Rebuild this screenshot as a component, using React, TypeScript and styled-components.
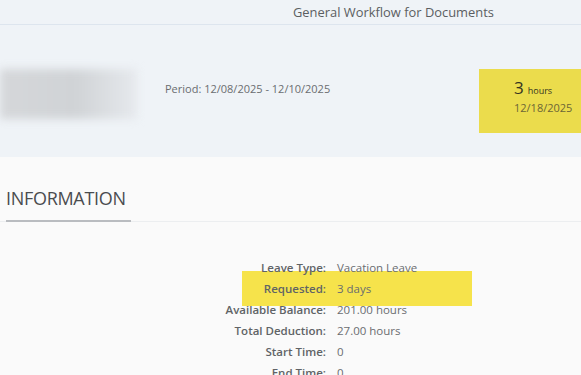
import React from "react";
import styled, { createGlobalStyle } from "styled-components";

const GlobalStyle = createGlobalStyle`
  html, body {
    margin: 0;
    padding: 0;
    background: #fafafa;
    font-family: "Open Sans", "Liberation Sans", sans-serif;
  }
`;

const Page = styled.div`
  width: 581px;
  height: 375px;
  overflow: hidden;
  background: #fafafa;
`;

const TitleBar = styled.header`
  height: 25px;
  box-sizing: border-box;
  padding-left: 293px;
  display: flex;
  align-items: center;
  background: #eff3f7;
  border-bottom: 1px solid #dde5ee;
`;

const Title = styled.span`
  font-size: 12.9px;
  color: #5b5e61;
`;

const ObjectHeader = styled.section`
  height: 132px;
  box-sizing: border-box;
  padding-top: 44px;
  display: flex;
  align-items: flex-start;
  background: #eff3f7;
`;

const BlurredName = styled.div`
  width: 137px;
  height: 50px;
  flex-shrink: 0;
  background: linear-gradient(90deg, #d5d7da 0%, #d0d3d6 55%, #e6e9ed 100%);
  filter: blur(4px);
`;

const Period = styled.span`
  margin-left: 28px;
  margin-top: 12px;
  font-size: 11px;
  color: #6a6d70;
`;

const KpiBox = styled.div`
  margin-left: auto;
  width: 102px;
  height: 64px;
  box-sizing: border-box;
  padding: 9px 0 0 35px;
  background: #ebdc4c;
`;

const KpiValue = styled.div`
  display: flex;
  align-items: baseline;
  gap: 4px;
  color: #35331f;
`;

const KpiNumber = styled.span`
  font-size: 17px;
  line-height: 20px;
`;

const KpiUnit = styled.span`
  font-size: 9px;
`;

const KpiDate = styled.div`
  margin-top: 2px;
  font-size: 11px;
  color: #6b6636;
`;

const InfoSection = styled.section`
  padding-top: 28px;
`;

const TabStrip = styled.div`
  border-bottom: 1px solid #eceef0;
  padding-left: 6px;
`;

const Tab = styled.div`
  display: inline-block;
  width: 125px;
  padding-bottom: 9px;
  font-size: 18px;
  line-height: 26px;
  color: #4a4c4f;
  letter-spacing: -0.3px;
  border-bottom: 2px solid #b9bcc0;
  margin-bottom: -1px;
`;

const Form = styled.div`
  position: relative;
  margin-top: 35px;
  display: grid;
  grid-template-columns: 326px 1fr;
  column-gap: 11px;
`;

/* marker highlight laid over the "Requested" row */
const Highlight = styled.div`
  position: absolute;
  left: 242px;
  top: 14px;
  width: 230px;
  height: 35px;
  background: #f6e34b;
`;

const Label = styled.span`
  position: relative;
  text-align: right;
  font-size: 11.5px;
  line-height: 21px;
  font-weight: 600;
  color: #606366;
`;

const Value = styled.span`
  position: relative;
  font-size: 11.5px;
  line-height: 21px;
  color: #6a6d70;
`;

const fields: [string, string][] = [
  ["Leave Type:", "Vacation Leave"],
  ["Requested:", "3 days"],
  ["Available Balance:", "201.00 hours"],
  ["Total Deduction:", "27.00 hours"],
  ["Start Time:", "0"],
  ["End Time:", "0"],
];

export default function App() {
  return (
    <Page>
      <GlobalStyle />
      <TitleBar>
        <Title>General Workflow for Documents</Title>
      </TitleBar>
      <ObjectHeader>
        <BlurredName />
        <Period>Period: 12/08/2025 - 12/10/2025</Period>
        <KpiBox>
          <KpiValue>
            <KpiNumber>3</KpiNumber>
            <KpiUnit>hours</KpiUnit>
          </KpiValue>
          <KpiDate>12/18/2025</KpiDate>
        </KpiBox>
      </ObjectHeader>
      <InfoSection>
        <TabStrip>
          <Tab>INFORMATION</Tab>
        </TabStrip>
        <Form>
          <Highlight />
          {fields.map(([label, value]) => (
            <React.Fragment key={label}>
              <Label>{label}</Label>
              <Value>{value}</Value>
            </React.Fragment>
          ))}
        </Form>
      </InfoSection>
    </Page>
  );
}
